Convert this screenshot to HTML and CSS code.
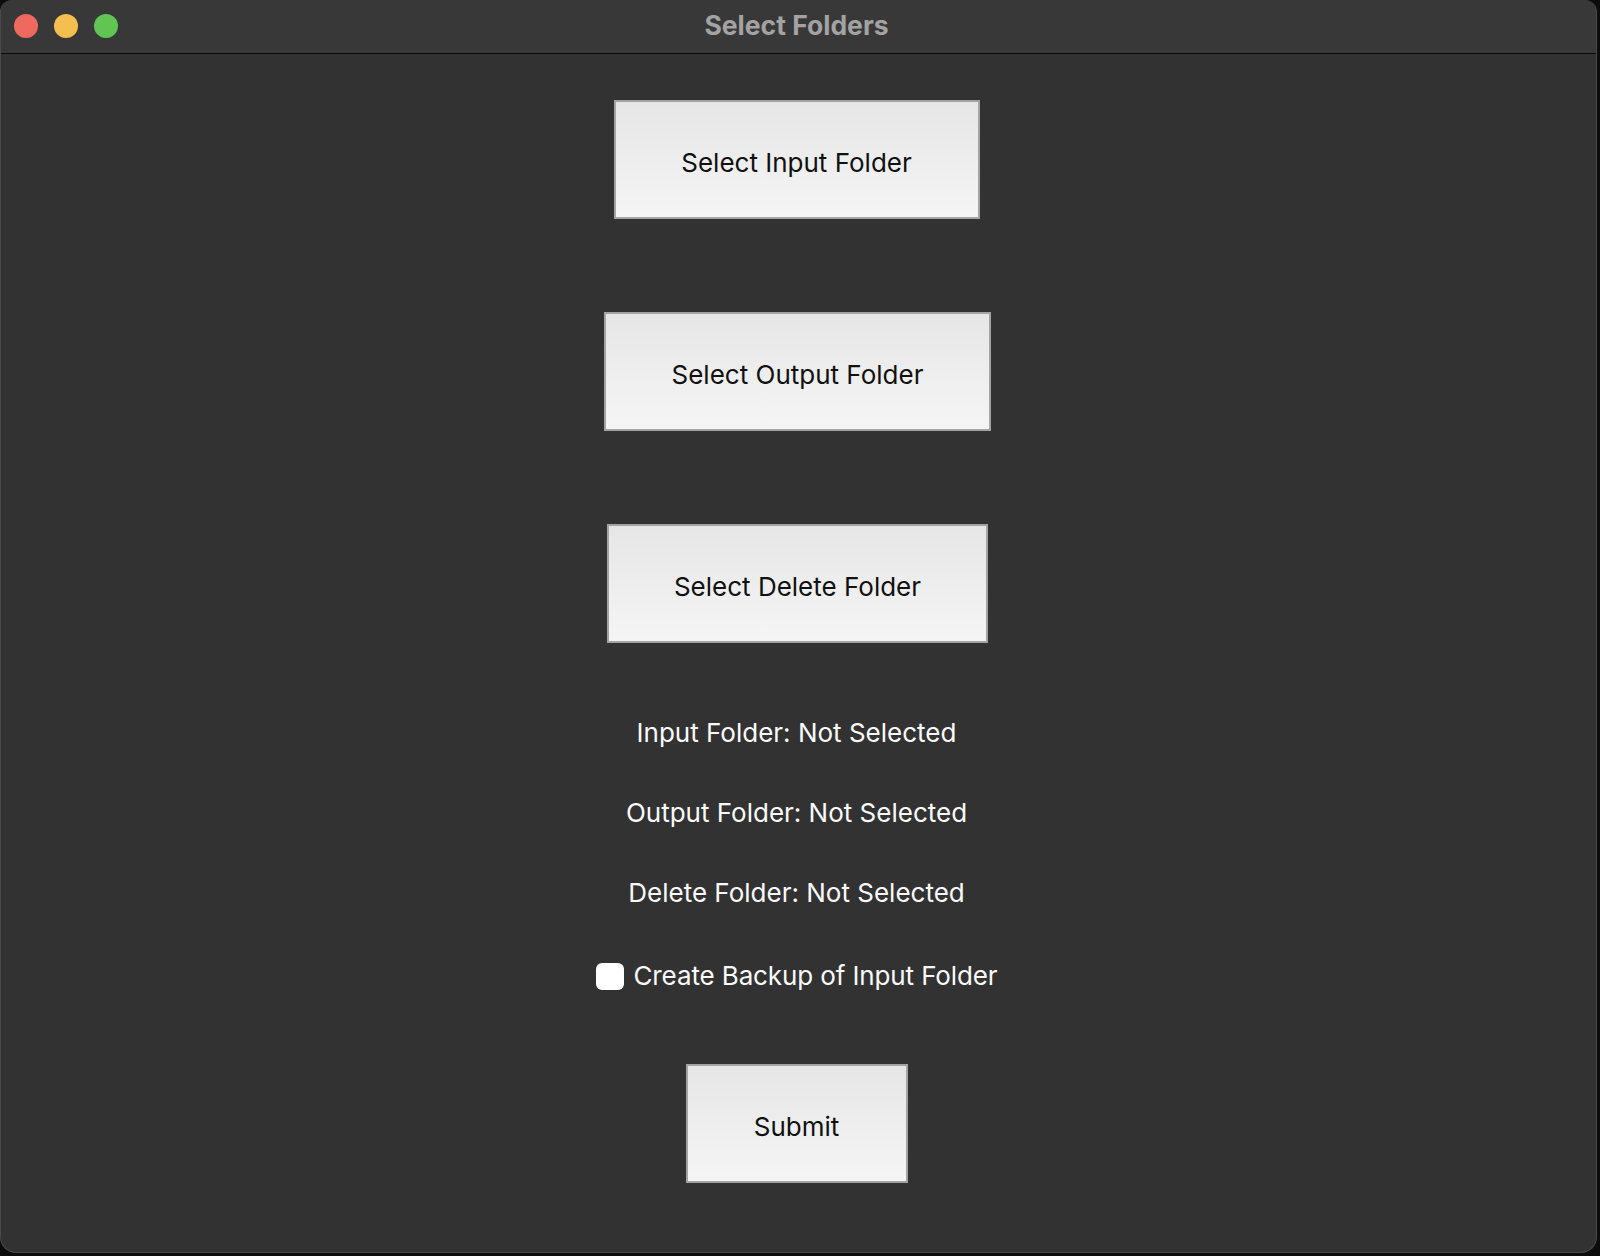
FILE: index.html
```html
<!DOCTYPE html>
<html lang="en">
<head>
<meta charset="utf-8">
<title>Select Folders</title>
<link rel="stylesheet" href="styles.css">
</head>
<body>
<div class="window">
  <header class="titlebar">
    <div class="lights">
      <span class="light red"></span>
      <span class="light yellow"></span>
      <span class="light green"></span>
    </div>
    <div class="title">Select Folders</div>
    <div></div>
  </header>
  <main class="content">
    <button class="btn btn-input">Select Input Folder</button>
    <button class="btn btn-output">Select Output Folder</button>
    <button class="btn btn-delete">Select Delete Folder</button>
    <div class="labels">
      <div class="label">Input Folder: Not Selected</div>
      <div class="label">Output Folder: Not Selected</div>
      <div class="label">Delete Folder: Not Selected</div>
    </div>
    <label class="check-row">
      <span class="checkbox"></span>
      <span class="check-text">Create Backup of Input Folder</span>
    </label>
    <button class="btn btn-submit">Submit</button>
  </main>
</div>
</body>
</html>
```
FILE: styles.css
```css
html, body {
  margin: 0;
  padding: 0;
  background: #0c0c0c;
}
body {
  width: 1600px;
  height: 1256px;
  overflow: hidden;
  font-family: Inter, "Noto Sans", sans-serif;
}
.window {
  width: 1597px;
  height: 1253px;
  box-sizing: border-box;
  background: #323232;
  border-radius: 12px 12px 16px 16px;
  border: 1px solid #4a4a4a;
  border-top: none;
  overflow: hidden;
  display: flex;
  flex-direction: column;
}
.titlebar {
  height: 54px;
  box-sizing: border-box;
  background: #383838;
  border-bottom: 1px solid #0a0a0a;
  display: grid;
  grid-template-columns: 1fr auto 1fr;
  align-items: center;
}
.lights {
  display: flex;
  gap: 16px;
  padding-left: 13px;
  padding-bottom: 2px;
}
.light {
  width: 24px;
  height: 24px;
  border-radius: 50%;
  display: block;
}
.red { background: #ee6a5f; }
.yellow { background: #f5bf4f; }
.green { background: #61c554; }
.title {
  color: #a3a3a3;
  font-weight: 700;
  font-size: 26.5px;
  padding-bottom: 4px;
  padding-right: 4px;
}
.content {
  flex: 1;
  display: flex;
  flex-direction: column;
  align-items: center;
  padding-top: 46px;
  padding-right: 4px;
}
.btn {
  height: 119px;
  box-sizing: border-box;
  border: 2px solid #a4a4a4;
  background: linear-gradient(#e6e6e6, #f5f5f5);
  color: #111;
  font-family: Inter, "Noto Sans", sans-serif;
  font-size: 26px;
  padding: 6px 0 0 0;
  margin: 0;
  border-radius: 0;
}
.btn-input { width: 366px; }
.btn-output { width: 387px; margin-top: 93px; margin-left: 2px; }
.btn-delete { width: 381px; margin-top: 93px; margin-left: 2px; }
.btn-submit { width: 222px; margin-top: 72px; }
.labels {
  margin-top: 74px;
  display: flex;
  flex-direction: column;
  align-items: center;
  gap: 48px;
}
.label {
  color: #fafafa;
  font-size: 26px;
  line-height: 32px;
}
.check-row {
  margin-top: 51px;
  display: flex;
  align-items: center;
  gap: 10px;
  height: 32px;
}
.checkbox {
  width: 28px;
  height: 27px;
  border-radius: 6px;
  background: #ffffff;
  display: block;
}
.check-text {
  color: #fafafa;
  font-size: 26px;
  line-height: 32px;
  letter-spacing: -0.12px;
}
```
